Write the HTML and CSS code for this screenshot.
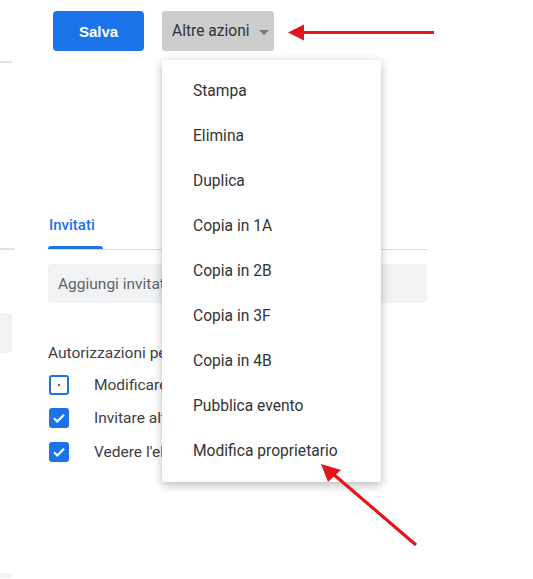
FILE: index.html
```html
<!DOCTYPE html>
<html lang="it">
<head>
<meta charset="utf-8">
<title>Evento</title>
<link rel="stylesheet" href="styles.css">
</head>
<body>
<div class="page">
  <aside class="rail">
    <div class="rail-line rail-line-top"></div>
    <div class="rail-line rail-line-mid"></div>
    <div class="rail-box"></div>
    <div class="rail-foot"></div>
  </aside>
  <main class="content">
    <div class="toolbar">
      <button class="btn-save">Salva</button>
      <div class="dropdown">
        <button class="btn-more">Altre azioni <span class="caret"></span></button>
        <ul class="menu">
          <li>Stampa</li>
          <li>Elimina</li>
          <li>Duplica</li>
          <li>Copia in 1A</li>
          <li>Copia in 2B</li>
          <li>Copia in 3F</li>
          <li>Copia in 4B</li>
          <li>Pubblica evento</li>
          <li>Modifica proprietario</li>
        </ul>
      </div>
    </div>
    <section class="guests">
      <div class="tabs">
        <div class="tab active">Invitati</div>
      </div>
      <div class="guest-input">Aggiungi invitati</div>
      <div class="perm-title">Autorizzazioni per gli invitati</div>
      <div class="perm-row"><span class="check partial"><span class="dot"></span></span><span>Modificare evento</span></div>
      <div class="perm-row"><span class="check on"><svg viewBox="0 0 20 20" width="20" height="20"><path d="M5 10.2l3.3 3.3L15 6.8" fill="none" stroke="#fff" stroke-width="2.2"/></svg></span><span>Invitare altri</span></div>
      <div class="perm-row"><span class="check on"><svg viewBox="0 0 20 20" width="20" height="20"><path d="M5 10.2l3.3 3.3L15 6.8" fill="none" stroke="#fff" stroke-width="2.2"/></svg></span><span>Vedere l'elenco degli invitati</span></div>
    </section>
  </main>
  <svg class="annot" viewBox="0 0 533 579" width="533" height="579">
    <line x1="434" y1="32.5" x2="300" y2="32.5" stroke="#e3161c" stroke-width="3.2"/>
    <polygon points="288,32.5 304,24.5 304,40.5" fill="#e3161c"/>
    <line x1="416" y1="545" x2="332" y2="473" stroke="#e3161c" stroke-width="3.2"/>
    <polygon points="321,464 341,470 328,482" fill="#e3161c"/>
  </svg>
</div>
</body>
</html>
```
FILE: styles.css
```css
* { box-sizing: border-box; }
html, body { margin: 0; padding: 0; background: #fff; }
body {
  font-family: Roboto, "Liberation Sans", Arial, sans-serif;
  color: #3c4043;
  width: 533px;
  height: 579px;
  overflow: hidden;
}
.page {
  position: relative;
  display: flex;
  width: 533px;
  height: 579px;
}
.rail {
  width: 13px;
  flex: none;
  display: flex;
  flex-direction: column;
}
.rail-line {
  height: 2px;
  background: #e3e3e3;
}
.rail-line-top { margin-top: 61px; width: 12px; }
.rail-line-mid { margin-top: 185px; width: 15px; height: 2px; }
.rail-box {
  margin-top: 63px;
  width: 12px;
  height: 40px;
  background: #f1f3f4;
  border-radius: 0 3px 3px 0;
}
.rail-foot {
  margin-top: 220px;
  width: 12px;
  height: 5px;
  background: #f1f3f4;
}
.content {
  margin-left: 35px;
  flex: 1;
  display: flex;
  flex-direction: column;
}
.toolbar {
  display: flex;
  align-items: flex-start;
  gap: 18px;
  padding-top: 11px;
  padding-left: 5px;
}
.btn-save {
  width: 91px;
  height: 40px;
  border: none;
  border-radius: 4px;
  background: #1a73e8;
  color: #fff;
  font-family: "Liberation Sans", Arial, sans-serif;
  font-weight: bold;
  font-size: 15px;
  padding: 0;
}
.dropdown { position: relative; }
.btn-more {
  height: 40px;
  width: 112px;
  border: none;
  border-radius: 3px;
  background: #cdcdcd;
  color: #333;
  font-family: Roboto, "Liberation Sans", sans-serif;
  font-size: 15.6px;
  padding: 0 0 0 10px;
  display: flex;
  align-items: center;
  gap: 9px;
}
.caret {
  width: 0;
  height: 0;
  border-left: 5px solid transparent;
  border-right: 5px solid transparent;
  border-top: 5px solid #7a7a7a;
  margin-top: 2px;
}
.menu {
  position: absolute;
  left: 0;
  top: 49px;
  width: 219px;
  margin: 0;
  padding: 8px 0 9px;
  list-style: none;
  background: #fff;
  border-radius: 3px;
  box-shadow: 0 3px 10px rgba(0,0,0,0.28);
  z-index: 5;
}
.menu li {
  height: 45px;
  display: flex;
  align-items: center;
  padding-left: 31px;
  font-size: 15.6px;
  color: #333;
}
.guests {
  margin-top: 150px;
  width: 379px;
  display: flex;
  flex-direction: column;
}
.tabs {
  display: flex;
  border-bottom: 1px solid #dadce0;
  height: 49px;
}
.tab {
  position: relative;
  height: 48px;
  line-height: 48px;
  padding: 0 2px 0 1px;
  font-size: 15px;
  font-weight: 500;
  color: #1a73e8;
  width: 55px;
}
.tab.active::after {
  content: "";
  position: absolute;
  left: 0;
  right: 0;
  bottom: 0;
  height: 3px;
  background: #1a73e8;
  border-radius: 3px 3px 0 0;
}
.guest-input {
  margin-top: 14px;
  height: 39px;
  background: #f1f3f4;
  border-radius: 4px;
  padding-left: 10px;
  display: flex;
  align-items: center;
  font-size: 15.5px;
  color: #5f6368;
}
.perm-title {
  margin-top: 40px;
  height: 20px;
  line-height: 20px;
  font-size: 15.5px;
  color: #3c4043;
}
.perm-row {
  display: flex;
  align-items: center;
  height: 33.5px;
  gap: 25px;
  padding-left: 1px;
  font-size: 15.5px;
  color: #3c4043;
}
.perm-title + .perm-row { margin-top: 5px; }
.check {
  width: 20px;
  height: 20px;
  border-radius: 3px;
  flex: none;
  display: flex;
  align-items: center;
  justify-content: center;
}
.check.partial {
  border: 2px solid #1a73e8;
  background: #fff;
}
.check .dot {
  width: 2px;
  height: 2px;
  background: #5f6368;
}
.check.on { background: #1a73e8; }
.annot {
  position: absolute;
  left: 0;
  top: 0;
  pointer-events: none;
  z-index: 10;
}
```
